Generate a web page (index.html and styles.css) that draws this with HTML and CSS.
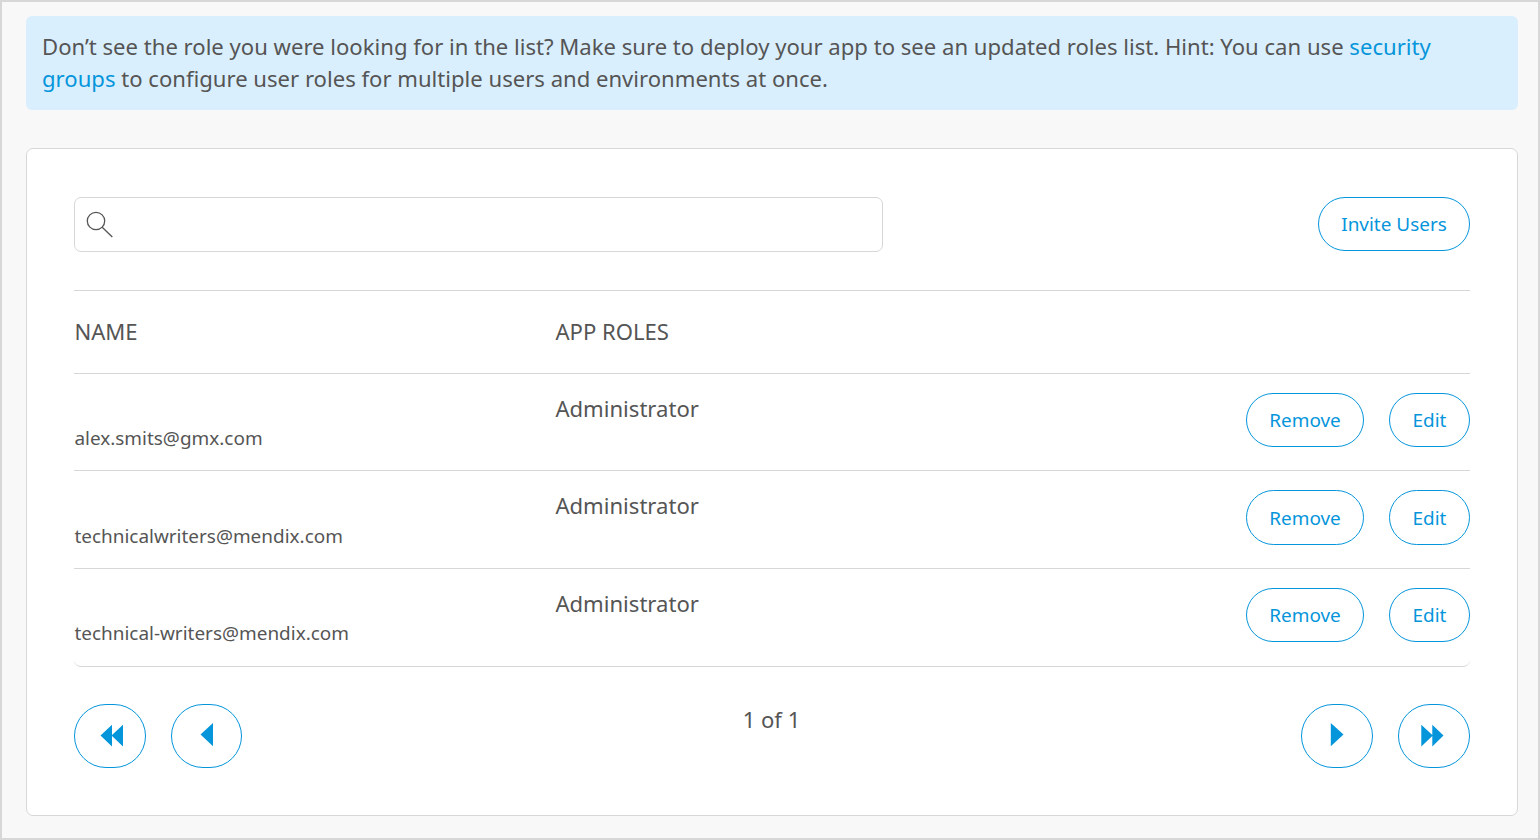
FILE: index.html
```html
<!DOCTYPE html>
<html lang="en">
<head>
<meta charset="utf-8">
<title>App roles</title>
<link rel="stylesheet" href="styles.css">
</head>
<body>
<main class="page">
  <div class="alert">Don’t see the role you were looking for in the list? Make sure to deploy your app to see an updated roles list. Hint: You can use <a class="link" href="#">security groups</a> to configure user roles for multiple users and environments at once.</div>
  <section class="panel">
    <div class="toolbar">
      <div class="search">
        <svg class="search-icon" width="28" height="28" viewBox="0 0 28 28" fill="none" stroke="#555" stroke-width="1.3"><circle cx="10" cy="10" r="8.7"/><path d="M16.2 16.2L26.3 26"/></svg>
      </div>
      <button class="btn">Invite Users</button>
    </div>
    <div class="list">
      <div class="row row-head"><span>NAME</span><span>APP ROLES</span></div>
      <div class="row">
        <span class="email">alex.smits@gmx.com</span><span class="role">Administrator</span>
        <div class="actions"><button class="btn btn-remove">Remove</button><button class="btn btn-edit">Edit</button></div>
      </div>
      <div class="row row-tall">
        <span class="email">technicalwriters@mendix.com</span><span class="role">Administrator</span>
        <div class="actions"><button class="btn btn-remove">Remove</button><button class="btn btn-edit">Edit</button></div>
      </div>
      <div class="row row-last">
        <span class="email">technical-writers@mendix.com</span><span class="role">Administrator</span>
        <div class="actions"><button class="btn btn-remove">Remove</button><button class="btn btn-edit">Edit</button></div>
      </div>
    </div>
    <nav class="pager">
      <div class="pager-group">
        <button class="page-btn" aria-label="First"><svg width="72" height="64" viewBox="0 0 72 64"><path d="M26.5 31.5L38 20.8V31L49 20.8V42.6L38 32V42.6Z"/></svg></button>
        <button class="page-btn page-btn-prev" aria-label="Previous"><svg width="71" height="64" viewBox="0 0 71 64"><path d="M29.5 30.5L42 19V42.2Z"/></svg></button>
      </div>
      <span class="status">1 of 1</span>
      <div class="pager-group">
        <button class="page-btn" aria-label="Next"><svg width="72" height="64" viewBox="0 0 72 64"><path d="M29.8 19L42.5 30.5L29.8 42.2Z"/></svg></button>
        <button class="page-btn" aria-label="Last"><svg width="72" height="64" viewBox="0 0 72 64"><path d="M23.3 20.8L34.3 31V20.8L45.5 31.5L34.3 42.6V32L23.3 42.6Z"/></svg></button>
      </div>
    </nav>
  </section>
</main>
</body>
</html>
```
FILE: styles.css
```css
* { box-sizing: border-box; }

body {
  margin: 0;
  font-family: "Noto Sans", sans-serif;
  font-size: 22.1px;
  line-height: 32px;
  color: #555;
}

.page {
  height: 840px;
  padding: 14px 20px 0 24px;
  border: 2px solid #d7d7d7;
  background: #f8f8f8;
}

.alert {
  height: 94px;
  padding: 14px 16px;
  border-radius: 6px;
  background: #daeffd;
}

.link { color: #0595db; text-decoration: none; }

.panel {
  height: 668px;
  margin-top: 38px;
  padding: 48px 47px 0;
  border: 1px solid #d7d7d7;
  border-radius: 7px;
  background: #fff;
}

.toolbar { display: flex; justify-content: space-between; align-items: flex-start; }

.search {
  display: flex;
  align-items: center;
  width: 809px;
  height: 55px;
  padding-left: 11px;
  border: 1px solid #d7d7d7;
  border-radius: 7px;
}

.btn {
  width: 152px;
  height: 54px;
  padding: 0;
  border: 1px solid #0595db;
  border-radius: 28px;
  background: #fff;
  color: #0595db;
  font: 18.95px/30px "Noto Sans", sans-serif;
}
.btn-remove { width: 118px; }
.btn-edit { width: 81px; }

.list { margin-top: 38px; border-top: 1px solid #d7d7d7; }

.row {
  display: grid;
  grid-template-columns: 481px 1fr auto;
  align-items: start;
  height: 97px;
  padding-left: 0.4px;
  border-bottom: 1px solid #d7d7d7;
}
.row-head { height: 83px; padding-top: 24px; }
.row-tall, .row-last { height: 98px; }
.row-tall .btn { height: 55px; }
.row-last { border-radius: 0 0 7px 7px; }

.email { padding-top: 48px; font-size: 18.95px; }
.row-tall .email { padding-top: 49px; }
.role { padding-top: 18px; }
.actions { display: flex; gap: 25px; padding-top: 19px; }

.pager { display: flex; justify-content: space-between; margin-top: 37px; }
.pager-group { display: flex; gap: 25px; }
.status { line-height: 30px; }

.page-btn {
  display: flex;
  align-items: center;
  justify-content: center;
  width: 72px;
  height: 64px;
  padding: 0;
  border: 1px solid #0595db;
  border-radius: 32px;
  background: #fff;
  fill: #0595db;
}
.page-btn svg { flex: none; }
.page-btn-prev { width: 71px; }
```
